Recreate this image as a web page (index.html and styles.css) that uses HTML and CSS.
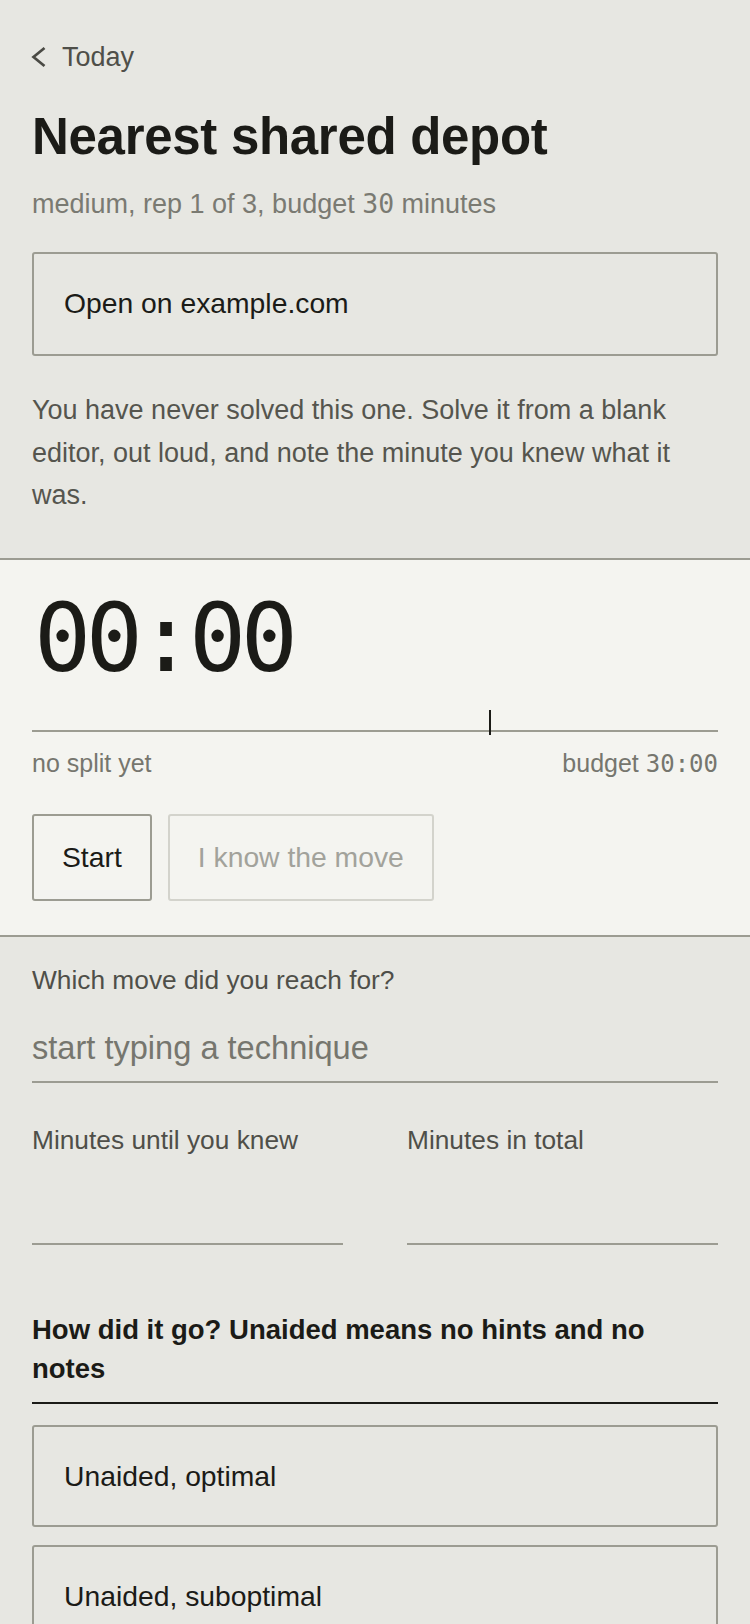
FILE: index.html
```html
<!DOCTYPE html>
<html lang="en">
<head>
<meta charset="utf-8">
<title>Nearest shared depot</title>
<link rel="stylesheet" href="styles.css">
</head>
<body>
<div class="page">
  <a class="back" href="#">
    <svg class="chev" width="17" height="22" viewBox="0 0 17 22"><polyline points="14.5,2 3.5,11 14.5,20" fill="none" stroke="#4a4a44" stroke-width="2.7" stroke-linecap="butt" stroke-linejoin="miter"/></svg>
    <span>Today</span>
  </a>
  <h1 class="title">Nearest shared depot</h1>
  <p class="meta">medium, rep 1 of 3, budget <span class="mono">30</span> minutes</p>
  <a class="box-link" href="#">Open on example.com</a>
  <p class="note">You have never solved this one. Solve it from a blank editor, out loud, and note the minute you knew what it was.</p>
</div>

<section class="panel">
  <div class="timer">00:00</div>
  <div class="track"><span class="tick"></span></div>
  <div class="split-row">
    <span>no split yet</span>
    <span>budget <span class="mono">30:00</span></span>
  </div>
  <div class="actions">
    <button class="btn">Start</button>
    <button class="btn btn-disabled" disabled>I know the move</button>
  </div>
</section>

<div class="page form">
  <label class="field">
    <span class="label">Which move did you reach for?</span>
    <input class="input input-lg" type="text" placeholder="start typing a technique">
  </label>
  <div class="pair">
    <label class="field">
      <span class="label">Minutes until you knew</span>
      <input class="input input-num" type="text">
    </label>
    <label class="field">
      <span class="label">Minutes in total</span>
      <input class="input input-num" type="text">
    </label>
  </div>
  <h2 class="group-title">How did it go? Unaided means no hints and no notes</h2>
  <div class="options">
    <button class="option">Unaided, optimal</button>
    <button class="option">Unaided, suboptimal</button>
    <button class="option">With hints</button>
    <button class="option">Could not solve</button>
  </div>
</div>
</body>
</html>
```

FILE: styles.css
```css
* { box-sizing: border-box; }
html, body { margin: 0; padding: 0; }
body {
  background: #e7e7e2;
  color: #1b1b17;
  font-family: "Liberation Sans", Arial, sans-serif;
  font-size: 27px;
}
.mono {
  font-family: "DejaVu Sans Mono", monospace;
  font-variant-numeric: slashed-zero;
}
.page { padding: 0 32px; }

.back {
  display: flex;
  align-items: center;
  gap: 15px;
  margin-top: 41px;
  height: 32px;
  color: #4f4f49;
  text-decoration: none;
  font-size: 27px;
  line-height: 32px;
  margin-left: -2px;
}
.chev { display: block; }

.title {
  margin: 33.5px 0 0;
  font-size: 51px;
  line-height: 60px;
  font-weight: 700;
  letter-spacing: -0.3px;
}
.meta {
  margin: 21px 0 0;
  font-size: 27px;
  line-height: 32px;
  color: #7a7a72;
}
.meta .mono { font-size: 0.98em; }
.box-link {
  display: block;
  margin-top: 32.6px;
  border: 2px solid #9c9c92;
  border-radius: 3px;
  padding: 33px 30px 34px;
  font-size: 28.3px;
  line-height: 33px;
  color: #1b1b17;
  text-decoration: none;
}
.note {
  margin: 33px 0 0;
  font-size: 27px;
  line-height: 42.5px;
  color: #55554e;
}

.panel {
  margin-top: 41px;
  background: #f4f4f0;
  border-top: 2px solid #9c9c92;
  border-bottom: 2px solid #9c9c92;
  padding: 31px 32px 34px;
}
.timer {
  font-family: "DejaVu Sans Mono", monospace;
  font-variant-numeric: slashed-zero;
  font-size: 95px;
  line-height: 95px;
  letter-spacing: -5.5px;
  margin-left: 2px;
  color: #1b1b17;
}
.track {
  position: relative;
  margin-top: 44px;
  height: 2px;
  background: #9c9c92;
}
.tick {
  position: absolute;
  left: 66.67%;
  top: -20px;
  width: 2px;
  height: 25px;
  background: #1b1b17;
}
.split-row {
  display: flex;
  justify-content: space-between;
  margin-top: 16px;
  font-size: 25px;
  line-height: 30px;
  color: #76766e;
}
.split-row .mono { font-size: 0.96em; }
.actions {
  display: flex;
  gap: 16px;
  margin-top: 35px;
}
.btn {
  font-family: inherit;
  font-size: 28.3px;
  line-height: 33px;
  padding: 25px 28px;
  background: transparent;
  border: 2px solid #9c9c92;
  border-radius: 3px;
  color: #1b1b17;
}
.btn-disabled {
  border-color: #d3d3cc;
  color: #a2a29b;
}

.form { padding-top: 27px; }
.field { display: flex; flex-direction: column; }
.label {
  font-size: 26.3px;
  line-height: 32px;
  color: #4f4f49;
}
.input {
  margin-top: 29px;
  font-family: inherit;
  font-size: 26px;
  line-height: 40px;
  height: 58px;
  padding: 3px 0 13px;
  background: transparent;
  border: 0;
  border-bottom: 2px solid #9c9c92;
  border-radius: 0;
  color: #1b1b17;
  outline: none;
  width: 100%;
}
.input-lg { font-size: 32.6px; }
.input-num { margin-top: 31px; }
.input::placeholder { color: #76766e; }
.pair {
  display: grid;
  grid-template-columns: 1fr 1fr;
  column-gap: 64px;
  margin-top: 41.4px;
}
.group-title {
  margin: 65px 0 0;
  font-size: 27.5px;
  line-height: 39px;
  font-weight: 700;
  padding-bottom: 14px;
  border-bottom: 2px solid #1b1b17;
}
.options {
  display: flex;
  flex-direction: column;
  gap: 18px;
  margin-top: 21px;
  padding-bottom: 40px;
}
.option {
  text-align: left;
  font-family: inherit;
  font-size: 28.3px;
  line-height: 33px;
  padding: 33px 30px 32px;
  background: transparent;
  border: 2px solid #9c9c92;
  border-radius: 3px;
  color: #1b1b17;
}
```
